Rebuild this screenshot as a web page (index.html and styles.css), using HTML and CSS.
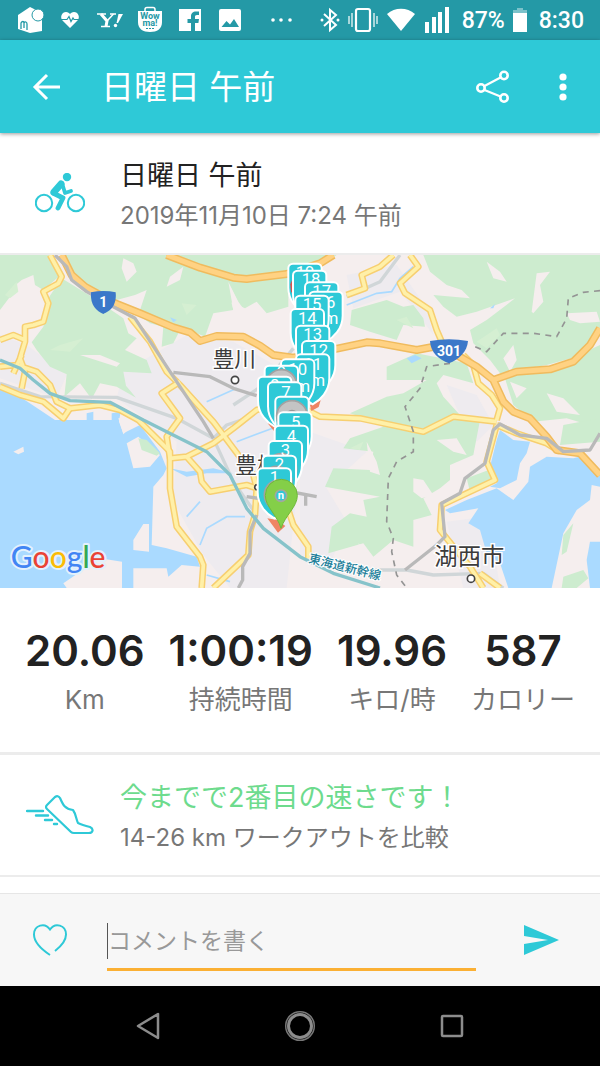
FILE: index.html
```html
<!DOCTYPE html>
<html lang="ja">
    <head>
        <meta charset="utf-8">
        <meta name="viewport" content="width=device-width, initial-scale=1">
        <title>日曜日 午前</title>
        <link rel="stylesheet" href="styles.css">
    </head>
    <body>
        <div class="status">
            <div class="statusLeft">
                <svg class="appIcon" viewBox="0 0 28 28">
                    <path d="M2 9L14 1l12 6v18l-12 2L2 23z" fill="#fff"/>
                    <circle cx="22" cy="9" r="6" fill="#fff" stroke="#2499a6" stroke-width="1"/>
                    <path d="M5 23v-6c1-2 3-2 3 0v5M8 17c1-2 3-1 3 1v6" fill="none" stroke="#2499a6" stroke-width="1.300"/>
                </svg>
                <svg class="appIcon" viewBox="0 0 28 28">
                    <path d="M14 22L6.500 14.500C3.500 11 6 6 10 6c2 0 3.300 1 4 2.200C14.700 7 16 6 18 6c4 0 6.500 5 3.500 8.500z" fill="#fff"/>
                    <path d="M5 13.500h6l2-3 2 5 2-3.500 1 1.500h5" fill="none" stroke="#2499a6" stroke-width="1.200"/>
                </svg>
                <svg class="appIcon" viewBox="0 0 28 28">
                    <path d="M1 8h9M14 8h6M5 20.500h9" stroke="#fff" stroke-width="1.400"/>
                    <path d="M5 8l6 7-1 5.500" fill="none" stroke="#fff" stroke-width="3"/>
                    <path d="M17.500 8L11 15" stroke="#fff" stroke-width="1.500"/>
                    <path d="M22.500 8h4.500L22 17h-1.500z" fill="#fff"/>
                    <circle cx="19.500" cy="19.500" r="1.700" fill="#fff"/>
                </svg>
                <svg class="appIcon" viewBox="0 0 28 28">
                    <path d="M9 6V3.500a2 2 0 0 1 2-2h6a2 2 0 0 1 2 2V6" fill="none" stroke="#fff" stroke-width="1.500"/>
                    <path d="M2 5h24v11c0 7-5 10-12 10S2 23 2 16z" fill="#fff"/>
                    <text class="iconText" x="14" y="13">Wow</text>
                    <text class="iconText" x="14" y="20">ma!</text>
                    <path d="M10 22.500h8" stroke="#2499a6" stroke-dasharray="2 1"/>
                </svg>
                <svg class="appIcon" viewBox="0 0 28 28">
                    <path d="M3 3h22v22H3z" fill="#fff"/>
                    <path d="M15 25v-8h-3.500v-4H15v-2.500C15 7 17 5.500 20 5.500h3V9h-2c-1.500 0-2 .7-2 1.800V13h4l-.6 4H19v8z" fill="#2499a6"/>
                </svg>
                <svg class="appIcon" viewBox="0 0 28 28">
                    <rect x="3" y="3" width="22" height="22" rx="2" fill="#fff"/>
                    <path d="M5.500 21l5-6 3.500 3.500L18 13l5 8z" fill="#2499a6"/>
                </svg>
                <svg class="dots" viewBox="0 0 22 28">
                    <g fill="#fff"><circle cx="3" cy="14" r="1.800"/><circle cx="11" cy="14" r="1.800"/><circle cx="20" cy="14" r="1.800"/></g>
                </svg>
            </div>
            <div class="statusRight">
                <svg width="20" height="28" viewBox="0 0 20 28">
                    <path d="M4 8l12 11-6 5V4l6 5L4 20" fill="none" stroke="#fff" stroke-width="2"/>
                    <circle cx="2" cy="14" r="1.500" fill="#fff"/><circle cx="18" cy="14" r="1.500" fill="#fff"/>
                </svg>
                <svg width="30" height="28" viewBox="0 0 30 28">
                    <rect x="8" y="3" width="14" height="22" rx="2" fill="none" stroke="#fff" stroke-width="2.200"/>
                    <path d="M4 7v14M1 10v8M26 7v14M29 10v8" stroke="#d3ebed" stroke-width="1.500"/>
                </svg>
                <svg width="30" height="28" viewBox="0 0 30 28">
                    <path d="M1 8C9 1 21 1 29 8L15 25z" fill="#fff"/>
                </svg>
                <svg width="26" height="28" viewBox="0 0 26 28">
                    <path d="M1 16h4v11H1zM8 11h4v16H8zM14 6h4v21h-4zM21 1h4v26h-4z" fill="#fff"/>
                </svg>
                <span class="percent">87%</span>
                <svg width="14" height="28" viewBox="0 0 14 28">
                    <path d="M4 2h6v2h4v4H0V4h4z" fill="#7cc2ca"/><path d="M0 7h14v19H0z" fill="#fff"/>
                </svg>
                <span class="clock">8:30</span>
            </div>
        </div>

        <header class="appbar">
            <button class="iconBtn" aria-label="戻る">
                <svg width="28" height="28" viewBox="0 0 28 28"><path d="M15 2L3 14l12 12M3 14h25" fill="none" stroke="#fff" stroke-width="3"/></svg>
            </button>
            <h1 class="title">日曜日 午前</h1>
            <button class="iconBtn" aria-label="共有">
                <svg width="34" height="34" viewBox="0 0 34 34">
                    <g fill="none" stroke="#fff" stroke-width="2.600"><circle cx="5" cy="18" r="3.700"/><circle cx="28" cy="5.500" r="3.700"/><circle cx="28" cy="28" r="3.700"/></g>
                    <path d="M8.500 16L24.500 7.500M8.500 20l16 6.500" stroke="#fff" stroke-width="2.200"/>
                </svg>
            </button>
            <button class="iconBtn moreBtn" aria-label="メニュー">
                <svg width="8" height="28" viewBox="0 0 8 28"><g fill="#fff"><circle cx="4" cy="4" r="3.600"/><circle cx="4" cy="14" r="3.600"/><circle cx="4" cy="24" r="3.600"/></g></svg>
            </button>
        </header>

        <main class="content">
            <section class="row">
                <div class="rowIcon">
                    <svg width="50" height="40" viewBox="0 0 50 40">
                        <g fill="none" stroke="#2ec9d7" stroke-width="2"><circle cx="9" cy="30" r="8.200"/><circle cx="41" cy="30" r="8.200"/></g>
                        <circle cx="32" cy="4" r="4.200" fill="#2ec9d7"/>
                        <path d="M26 11l-7 8" stroke="#2ec9d7" stroke-width="7" stroke-linecap="round"/>
                        <path d="M27 10l3 10 6-2" fill="none" stroke="#2ec9d7" stroke-width="3.800" stroke-linecap="round" stroke-linejoin="round"/>
                        <path d="M18 20l10 5-5 10" fill="none" stroke="#2ec9d7" stroke-width="4.800" stroke-linecap="round" stroke-linejoin="round"/>
                    </svg>
                </div>
                <div>
                    <h2 class="rowTitle">日曜日 午前</h2>
                    <p class="rowSub">2019年11月10日 7:24 午前</p>
                </div>
            </section>

            <!-- route map -->
            <svg class="map" viewBox="0 0 1800 999" role="img" aria-label="地図">
                <defs>
                    <path id="pin" d="M14 0H86a14 14 0 0 1 14 14V72c0 40-28 66-50 78C28 138 0 112 0 72V14A14 14 0 0 1 14 0z" fill="#2ec9d7" stroke="#fff" stroke-width="6"/>
                    <g id="greyPin"><circle r="46" fill="#c4c4c4" stroke="#a2a2a2" stroke-width="5"/><circle r="16" fill="#ccc" stroke="#999" stroke-width="6"/></g>
                    <g id="minorRoads">
                        <path d="M150 0L185 65 175 85 130 110 145 145 130 200 100 210 75 215V260L60 310 75 350 65 400M0 255L40 240 75 255M0 335L50 330 110 350 150 390 170 440 210 460 190 490 130 440 60 420 0 395M40 355L65 300"/>
                        <path d="M210 460L300 450 360 465 415 495 510 590V700L530 815 600 905 610 930 605 999M390 185L450 260 500 350 540 390 640 500 760 660 770 700 765 780 750 830 745 900 640 999"/>
                        <path d="M540 380L485 415 540 490 500 545 510 610 560 605 640 565 700 520 770 465 850 440M560 605L600 650 605 680 630 710 740 690 770 700M860 750L880 810 925 875V910"/>
                        <path d="M1230 0L1255 35 1200 85 1215 115 1290 165 1310 225 1325 260M1180 0L1140 35 1085 60 1095 100 1040 120M1390 300L1420 330 1435 385 1475 420 1500 460 1490 495M920 465L960 485 1080 490 1270 530 1310 510 1360 485 1490 500"/>
                        <path d="M1490 510L1460 620 1485 675 1400 715 1325 750 1320 825 1360 875 1410 935 1450 999M1490 510L1550 535 1640 565 1680 590M1440 955L1500 999"/>
                    </g>
                    <path id="mainRoads" d="M500 0L600 38 700 68 740 72 860 57 960 25 1000 0M185 0L215 60 255 95 345 145 420 175 520 217 570 232 600 258 650 243 730 245 780 272 820 300 880 308 1015 280 1100 262 1140 265 1250 285 1330 270 1370 300 1430 335 1480 375 1510 440 1540 470 1590 490 1640 545 1670 585 1740 595 1800 660M1480 375L1550 350 1650 343 1720 320 1770 270 1800 220"/>
                </defs>
                <rect width="1800" height="999" fill="#f5eeee"/>
                <g fill="#eeebef">
                    <path d="M370 350L560 240 700 260 860 350 900 620 860 999H690L610 900 520 740 530 560 350 430z"/>
                    <path d="M0 240L80 270 200 360 170 430 0 370z"/>
                    <path d="M900 520L1100 590 980 700 1040 800 990 930 900 900z"/>
                    <path d="M1040 60L1190 30 1280 160 1300 240 1250 170 1200 110 1060 160z"/>
                    <path d="M1340 390L1430 420 1480 510 1430 560 1370 460z"/>
                    <path d="M1340 800L1420 790 1480 870 1500 999H1390z"/>
                </g>
                <g fill="#cdeccf">
                    <path d="M0 0H150L182 60 130 105 105 90 100 60 65 75 35 100 30 125 0 165z"/>
                    <path d="M95 262L130 215 145 130 185 70 275 125 370 190 385 235 410 250 375 285 440 315 455 355 370 350 378 392 408 428 350 395 300 385 275 432 240 385 193 425 200 358 150 335 110 285z"/>
                    <path d="M190 0H1010L940 45 865 60V155L800 175 770 140 735 160 690 140 680 85 700 165 640 175 615 245 545 215 520 265 485 275 490 215 450 205 415 180 440 105 405 120 350 135 280 105 215 55z"/>
                    <path d="M1270 0H1800V225L1730 305 1640 330 1500 355 1470 315 1420 265 1410 225 1460 195 1545 130 1430 170 1370 185 1330 155 1300 120 1410 130 1385 105 1340 90 1290 50z"/>
                    <path d="M1510 355L1640 345 1800 270V520L1700 490 1600 500 1540 450z"/>
                    <path d="M1055 165L1160 135 1210 155 1240 150 1270 190 1275 215 1210 210 1190 255 1110 230 1050 210z"/>
                    <path d="M1160 335L1250 295 1400 325 1420 385 1330 360 1310 385 1330 425 1380 480 1440 495 1420 600 1350 630 1350 675 1320 700 1270 730 1295 780 1240 795V875L1180 855 1120 905 1090 865 985 895 995 815 1050 775 1100 785 1090 735 1140 725 975 695 1000 640 1110 645 1120 590 1030 580 1050 550 1150 515 1110 495 1050 475 1160 425 1210 415 1280 375 1160 375z"/>
                    <path d="M1690 510L1800 490V560L1680 570z"/>
                    <path d="M1720 805L1700 890 1685 900 1690 840zM1690 965L1750 945 1765 970 1730 999H1685z"/>
                    <path d="M1400 670L1480 640 1490 665 1410 710z"/>
                </g>
                <!-- clearings -->
                <g fill="#f5eeee">
                    <path d="M370 10L400 25 410 50 380 80 365 40zM510 65L550 35 540 75 500 95zM240 300L300 300 360 325 350 335zM685 80L715 140 740 175 700 165z"/>
                    <path d="M1460 20L1500 50 1520 80 1480 70zM1610 55L1650 50 1620 90 1630 140 1600 175 1595 170zM1700 175L1790 170 1800 200 1740 205 1710 195zM1510 310L1540 270 1550 315 1530 350z"/>
                    <path d="M1640 415L1690 430 1740 480 1670 470zM1530 380L1580 400 1550 430zM1240 670L1270 675 1300 720 1265 730 1240 710zM1100 560L1130 620 1140 660 1110 650zM1310 555L1370 550 1400 600 1360 590zM1075 865L1100 890 1090 910z"/>
                </g>
                <g fill="#d5efd2"><path d="M15 120L50 80 55 110 30 130zM180 270L250 250 210 290 150 285zM545 145L590 150 560 180zM1430 260L1490 220 1500 240 1460 280zM1050 580L1090 560 1080 585zM1190 195L1220 185 1240 220z"/></g>
                <!-- water -->
                <g fill="#aadaff">
                    <path d="M0 402L60 425 120 465 165 495H355L370 535 420 510 480 590 500 640 490 660 460 695 455 870 500 880 590 905 600 935 545 930 505 965 500 940H400V999H366V920L300 910 190 985 200 999H0z"/>
                    <path d="M1490 555L1500 525 1540 555 1590 560 1580 595 1560 625 1550 675 1500 700 1470 695 1490 685 1470 635z"/>
                    <path d="M1590 635L1640 605 1720 610 1760 600 1800 645V695L1775 690 1770 735 1730 765 1690 835 1655 999H1525L1500 925 1460 895 1440 825 1405 805 1435 760 1350 775 1335 765 1400 735 1490 700 1540 735 1585 680z"/>
                    <path d="M1800 860H1770L1760 915 1770 999H1800z"/>
                    <path d="M510 640L560 650 640 640 700 655 620 655 560 665zM260 475L280 470V495H260zM335 475L362 470 355 510H335zM1220 310L1245 300 1265 310 1235 325zM510 187L530 195 520 202zM1470 160L1485 147 1480 160z"/>
                </g>
                <g fill="none" stroke="#aadaff" stroke-width="5">
                    <path d="M620 440L710 400M710 560L830 515M1040 150L1130 115 1175 110 1200 70 1240 35M560 785L600 740M600 870L620 820 680 785 735 785M620 960L690 980"/>
                </g>
                <g fill="#f5eeee">
                    <path d="M355 490H420L370 538zM380 565L415 545 480 600 450 635 400 640zM400 885V855L430 807H447V890zM40 590L70 575 72 590 55 598z"/>
                </g>
                <path d="M415 550L440 555 480 595 470 602 425 585z" fill="#cdeccf"/>
                <path class="rail lightRail" d="M0 385L120 425 350 427 530 490 640 550 700 680 770 780M640 550L680 510 740 490M1120 945H1220L1300 960 1450 955 1510 999M1040 125L1140 80 1200 0M700 450L790 390 880 280"/>

                <!-- roads: casing, then fill -->
                <use href="#minorRoads" class="road yellowCase"/>
                <use href="#minorRoads" class="road yellowFill"/>
                <use href="#mainRoads" class="road orangeCase"/>
                <use href="#mainRoads" class="road orangeFill"/>
                <path class="rail" d="M165 0L200 35 215 75 260 110 330 150 405 190 510 350 610 500 640 550M520 352L630 365 700 400 770 422M740 725L790 732M860 708L950 725M917 722V752M770 780L750 830V895L728 935V975L715 999M1215 945L1310 870 1335 845 1325 745 1380 715 1395 670 1455 625 1480 525 1500 507 1560 540 1640 550 1690 590 1770 585 1800 535"/>
                <path class="rail shinkansen" d="M0 315L60 340 100 375 150 415 210 437 330 442 430 495 500 530 620 590 690 660 740 760 790 820 900 905 1000 955 1140 999"/>
                <path class="border" d="M1800 107L1750 112 1705 130 1700 190 1670 245 1600 235 1510 235 1460 290 1425 275M1350 325L1280 335 1260 400 1215 455 1240 530V590L1190 620 1165 670 1160 800 1180 850 1175 890 1190 960 1220 999"/>

                <path d="M273 112q38-8 74 0c4 42-18 56-37 65c-20-9-40-24-37-65z" fill="#3b78c9"/>
                <text class="shield" x="310" y="155">1</text>
                <path d="M1290 258q57-10 114 0c-2 32-28 56-57 67c-31-11-56-34-57-67z" fill="#3b78c9"/>
                <text class="shield" x="1347" y="303">301</text>

                <g class="place">
                    <text x="638" y="335">豊川</text>
                    <text x="706" y="653">豊橋</text>
                    <text class="city" x="1303" y="930">湖西市</text>
                </g>
                <g fill="#fff" stroke="#444" stroke-width="5"><circle cx="705" cy="375" r="11"/><circle cx="1413" cy="971" r="11"/><circle cx="772" cy="697" r="8"/></g>
                <text class="line" x="924" y="922" transform="rotate(14 924 922)">東海道新幹線</text>

                <!-- kilometre pins, the first kilometre lies on top -->
                <path d="M930 450l32-14-6 20-22 12zM803 505l20 0 4 30zM802 790l30 5 24 18-22 20z" fill="#ee8464"/>
                <g class="pins">
                    <g transform="translate(865 26)"><use href="#pin"/><text x="50" y="44">19</text></g>
                    <path d="M871 88l10-24v56l-8-10z" fill="#d9534f"/>
                    <g transform="translate(879 47)"><use href="#pin"/><text x="54" y="44">18</text></g>
                    <g transform="translate(915 82)"><use href="#pin"/><text x="50" y="44">17</text></g>
                    <g transform="translate(928 110)"><use href="#pin"/><text x="50" y="48">16</text><text x="50" y="98">Km</text></g>
                    <g transform="translate(886 122)"><use href="#pin"/><text x="50" y="44">15</text></g>
                    <g transform="translate(872 162)"><use href="#pin"/><text x="50" y="46">14</text></g>
                    <g transform="translate(888 212)"><use href="#pin"/><text x="50" y="44">13</text></g>
                    <g transform="translate(906 258)"><use href="#pin"/><text x="50" y="44">12</text></g>
                    <g transform="translate(888 298)"><use href="#pin"/><text x="50" y="48">11</text><text x="50" y="94">Km</text></g>
                    <g transform="translate(843 313)"><use href="#pin"/><text x="50" y="48">10</text><text x="50" y="98">Km</text></g>
                    <g transform="translate(794 332)"><use href="#pin"/><text x="50" y="36">9</text><use href="#greyPin" x="50" y="58"/></g>
                    <g transform="translate(774 365)"><use href="#pin"/><text x="50" y="44">8</text></g>
                    <g transform="translate(804 382)"><use href="#pin"/><text x="54" y="48">7</text></g>
                    <g transform="translate(826 425)"><use href="#pin"/><use href="#greyPin" x="50" y="58"/></g>
                    <g transform="translate(835 472)"><use href="#pin"/><text x="52" y="46">5</text></g>
                    <g transform="translate(824 512)"><use href="#pin"/><text x="50" y="48">4</text></g>
                    <g transform="translate(806 558)"><use href="#pin"/><use href="#greyPin" x="38" y="84"/><text x="50" y="44">3</text></g>
                    <g transform="translate(788 602)"><use href="#pin"/><use href="#greyPin" x="42" y="78"/><text x="50" y="44">2</text></g>
                    <g transform="translate(773 640)"><use href="#pin"/><use href="#greyPin" x="66" y="80"/><text x="50" y="44">1</text></g>
                </g>
                <path d="M843 820C832 780 796 756 796 721a48 48 0 0 1 96 0C892 756 856 780 843 820z" fill="#84cf48" stroke="#6fb93a" stroke-width="3"/>
                <circle cx="843" cy="722" r="17" fill="#2ec9d7" stroke="#a2a89e" stroke-width="5"/>
                <text class="pinMark" x="843" y="733">n</text>

                <text class="google" x="32" y="940"><tspan fill="#4285f4">G</tspan><tspan fill="#ea4335">o</tspan><tspan fill="#fbbc05">o</tspan><tspan fill="#4285f4">g</tspan><tspan fill="#34a853">l</tspan><tspan fill="#ea4335">e</tspan></text>
            </svg>

            <dl class="stats">
                <div class="stat"><dd>20.06</dd><dt>Km</dt></div>
                <div class="stat"><dd>1:00:19</dd><dt>持続時間</dt></div>
                <div class="stat"><dd>19.96</dd><dt>キロ/時</dt></div>
                <div class="stat"><dd>587</dd><dt>カロリー</dt></div>
            </dl>

            <section class="row">
                <div class="rowIcon">
                    <svg width="68" height="40" viewBox="0 0 68 40">
                        <path d="M21 10L29 2q3-2 5 1c3 7 5 11 13 12 3 4 3 9 5 13 4 2 8 3 12 4 4 2 3 6-1 6H48q-2 0-3-1L21 14q-2-2 0-4z" fill="none" stroke="#2ec9d7" stroke-width="2.200" stroke-linejoin="round"/>
                        <path d="M1 16h16M10 20.500h12M19 25h7M28 29h3" stroke="#2ec9d7" stroke-width="2.400" stroke-linecap="round"/>
                    </svg>
                </div>
                <div>
                    <h2 class="rowTitle best">今までで2番目の速さです！</h2>
                    <p class="rowSub">14-26 km ワークアウトを比較</p>
                </div>
            </section>
        </main>

        <form class="comment">
            <button class="iconBtn" type="button" aria-label="いいね">
                <svg width="36" height="32" viewBox="0 0 36 32">
                    <path d="M18 31C6 23 2 17 2 10.500 2 1 13-2 18 5.500 23-2 34 1 34 10.500c0 6-4 11-11 16.500" fill="none" stroke="#2ec9d7" stroke-width="2"/>
                </svg>
            </button>
            <div class="field">
                <input class="fieldInput" type="text" placeholder="コメントを書く" aria-label="コメントを書く">
            </div>
            <button class="iconBtn" type="submit" aria-label="送信">
                <svg width="36" height="32" viewBox="0 0 36 32"><path d="M0 1l35 15L0 31V20l24-4L0 12z" fill="#2ec9d7"/></svg>
            </button>
        </form>

        <nav class="navbar">
            <button class="iconBtn navBtn" aria-label="戻る">
                <svg width="28" height="28" viewBox="0 0 28 28"><path d="M24 2v24L4 14z" fill="none" stroke="#8c8c8c" stroke-width="2.500" stroke-linejoin="round"/></svg>
            </button>
            <button class="iconBtn navBtn" aria-label="ホーム">
                <svg width="32" height="32" viewBox="0 0 32 32"><circle cx="16" cy="16" r="14.300" fill="none" stroke="#777" stroke-width="1.500"/><circle cx="16" cy="16" r="11.500" fill="none" stroke="#8c8c8c" stroke-width="3"/></svg>
            </button>
            <button class="iconBtn navBtn" aria-label="履歴">
                <svg width="28" height="28" viewBox="0 0 28 28"><rect x="4" y="4" width="20" height="20" rx="1" fill="none" stroke="#8c8c8c" stroke-width="2.500"/></svg>
            </button>
        </nav>
    </body>
</html>
```
FILE: styles.css
```css
html,body {
    margin: 0;
}
body {
    display: flex;
    flex-direction: column;
    min-height: 100vh;
    background: #fff;
    color: #222;
    font-family: Inter, "Noto Sans CJK JP", sans-serif;
}
h1,h2,p,dl,dd {
    margin: 0;
}
svg {
    display: block;
    flex: none;
}
.iconBtn {
    display: flex;
    padding: 0;
    border: 0;
    background: none;
    cursor: pointer;
}
/* status bar */
.status {
    display: flex;
    justify-content: space-between;
    align-items: center;
    height: 40px;
    padding: 0 16px;
    background: #2499a6;
}
.statusLeft {
    display: flex;
    gap: 12px;
}
.appIcon {
    width: 28px;
    height: 28px;
}
.dots {
    width: 22px;
    height: 28px;
    margin-left: 14px;
}
.iconText {
    fill: #2499a6;
    font: 700 9px Roboto, sans-serif;
    text-anchor: middle;
}
.statusRight {
    display: flex;
    align-items: center;
    gap: 8px;
    color: #fff;
    font: 500 23px/28px Roboto, sans-serif;
}
.percent,
.clock {
    margin-left: 4px;
    padding-top: 2px;
}
/* app bar */
.appbar {
    display: flex;
    align-items: center;
    height: 93px;
    padding: 0 33px 0 32px;
    background: #2ec9d7;
    box-shadow: 0 1px 4px rgba(0, 0, 0, 0.4);
    z-index: 1;
}
.title {
    flex: 1;
    margin-left: 41px;
    color: #fff;
    font-size: 33px;
    font-weight: 400;
    line-height: 48px;
}
.moreBtn {
    margin-left: 49px;
}
/* rows with an icon */
.row {
    display: flex;
    align-items: center;
    height: 120px;
    border-bottom: 2px solid #ececec;
}
.rowIcon {
    display: flex;
    justify-content: center;
    width: 120px;
}
.rowTitle {
    padding-top: 5px;
    font-size: 27px;
    font-weight: 400;
    line-height: 40px;
}
.rowSub {
    color: #777;
    font-size: 24px;
    line-height: 40px;
}
.best {
    color: #6ddb8d;
}
.content {
    flex: 1;
}
/* map */
.map {
    width: 100%;
    height: auto;
}
.road {
    fill: none;
    stroke-linejoin: round;
}
.yellowCase {
    stroke: #f7cf70;
    stroke-width: 20px;
}
.yellowFill {
    stroke: #fff0a8;
    stroke-width: 11px;
}
.orangeCase {
    stroke: #f0bb5e;
    stroke-width: 24px;
}
.orangeFill {
    stroke: #ffd283;
    stroke-width: 15px;
}
.rail {
    fill: none;
    stroke: #b9b9b9;
    stroke-width: 10px;
    stroke-linejoin: round;
}
.lightRail {
    stroke: #d0d6d8;
}
.shinkansen {
    stroke: #86c3ca;
}
.border {
    fill: none;
    stroke: #949494;
    stroke-width: 5px;
    stroke-dasharray: 18 16;
}
.shield {
    fill: #fff;
    font: 700 42px Roboto, sans-serif;
    text-anchor: middle;
}
.place {
    fill: #3c3c3c;
    stroke: #fff;
    stroke-width: 8px;
    paint-order: stroke;
    font-size: 65px;
}
.city {
    font-size: 70px;
}
.line {
    fill: #21809a;
    stroke: #fff;
    stroke-width: 6px;
    paint-order: stroke;
    font-size: 37px;
    font-weight: 500;
}
.pins {
    fill: #fff;
    font: 400 50px Roboto, sans-serif;
    text-anchor: middle;
}
.pinMark {
    fill: #fff;
    font: 700 34px Roboto, sans-serif;
    text-anchor: middle;
}
.google {
    stroke: #e3f1fd;
    stroke-width: 12px;
    stroke-linejoin: round;
    paint-order: stroke;
    font: 500 90px Lato, sans-serif;
}
/* stats */
.stats {
    display: flex;
    justify-content: space-between;
    padding: 36px 25px 30px;
    border-bottom: 3px solid #ececec;
}
.stat {
    display: flex;
    flex-direction: column;
    align-items: center;
}
.stat dd {
    font-size: 42px;
    font-weight: 600;
    line-height: 54px;
}
.stat dt {
    color: #777;
    font-size: 26px;
    line-height: 44px;
}
/* comment form */
.comment {
    display: flex;
    align-items: center;
    height: 92px;
    padding: 0 40px 0 32px;
    border-top: 1px solid #e6e6e6;
    background: #f7f7f7;
}
.field {
    flex: 1;
    margin: 14px 48px 0 39px;
    padding-bottom: 9px;
    border-bottom: 3px solid #fbb034;
}
.fieldInput {
    display: block;
    box-sizing: border-box;
    width: 100%;
    height: 36px;
    padding: 0;
    border: 0;
    border-left: 1px solid #555;
    outline: 0;
    background: none;
    color: #222;
    font: inherit;
    font-size: 23px;
}
.fieldInput::placeholder {
    color: #999;
    opacity: 1;
}
/* system navigation */
.navbar {
    display: flex;
    align-items: center;
    height: 80px;
    padding: 0 12%;
    background: #000;
}
.navBtn {
    flex: 1;
    justify-content: center;
}
```
